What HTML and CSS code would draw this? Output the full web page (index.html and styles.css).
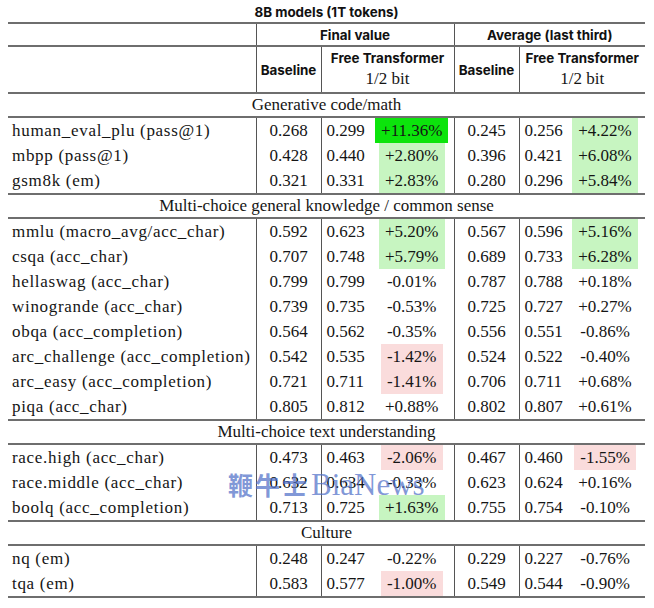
FILE: index.html
```html
<!DOCTYPE html>
<html>
<head>
<meta charset="utf-8">
<link rel="stylesheet" href="styles.css">
</head>
<body>
<div class="page">
  <div class="title">8B models (1T tokens)</div>
  <table class="results">
    <colgroup>
      <col class="w-label"><col class="w-base"><col class="w-val"><col class="w-delta"><col class="w-base"><col class="w-val2"><col class="w-delta2">
    </colgroup>
    <thead>
      <tr class="h1">
        <th></th>
        <th colspan="3" class="vl">Final value</th>
        <th colspan="3" class="vl">Average (last third)</th>
      </tr>
      <tr class="h2">
        <th></th>
        <th class="vl">Baseline</th>
        <th colspan="2" class="vl">Free Transformer<span class="sub">1/2 bit</span></th>
        <th class="vl">Baseline</th>
        <th colspan="2" class="vl">Free Transformer<span class="sub">1/2 bit</span></th>
      </tr>
    </thead>
    <tbody>
      <tr class="sec"><td colspan="7">Generative code/math</td></tr>
      <tr><td class="lbl">human_eval_plu (pass@1)</td><td class="b vl">0.268</td><td class="v vl">0.299</td><td class="d"><span class="hl strong">+11.36%</span></td><td class="b vl">0.245</td><td class="v vl">0.256</td><td class="d"><span class="hl good">+4.22%</span></td></tr>
      <tr><td class="lbl">mbpp (pass@1)</td><td class="b vl">0.428</td><td class="v vl">0.440</td><td class="d"><span class="hl good">+2.80%</span></td><td class="b vl">0.396</td><td class="v vl">0.421</td><td class="d"><span class="hl good">+6.08%</span></td></tr>
      <tr class="end"><td class="lbl">gsm8k (em)</td><td class="b vl">0.321</td><td class="v vl">0.331</td><td class="d"><span class="hl good">+2.83%</span></td><td class="b vl">0.280</td><td class="v vl">0.296</td><td class="d"><span class="hl good">+5.84%</span></td></tr>

      <tr class="sec"><td colspan="7">Multi-choice general knowledge / common sense</td></tr>
      <tr><td class="lbl">mmlu (macro_avg/acc_char)</td><td class="b vl">0.592</td><td class="v vl">0.623</td><td class="d"><span class="hl good">+5.20%</span></td><td class="b vl">0.567</td><td class="v vl">0.596</td><td class="d"><span class="hl good">+5.16%</span></td></tr>
      <tr><td class="lbl">csqa (acc_char)</td><td class="b vl">0.707</td><td class="v vl">0.748</td><td class="d"><span class="hl good">+5.79%</span></td><td class="b vl">0.689</td><td class="v vl">0.733</td><td class="d"><span class="hl good">+6.28%</span></td></tr>
      <tr><td class="lbl">hellaswag (acc_char)</td><td class="b vl">0.799</td><td class="v vl">0.799</td><td class="d"><span class="hl">-0.01%</span></td><td class="b vl">0.787</td><td class="v vl">0.788</td><td class="d"><span class="hl">+0.18%</span></td></tr>
      <tr><td class="lbl">winogrande (acc_char)</td><td class="b vl">0.739</td><td class="v vl">0.735</td><td class="d"><span class="hl">-0.53%</span></td><td class="b vl">0.725</td><td class="v vl">0.727</td><td class="d"><span class="hl">+0.27%</span></td></tr>
      <tr><td class="lbl">obqa (acc_completion)</td><td class="b vl">0.564</td><td class="v vl">0.562</td><td class="d"><span class="hl">-0.35%</span></td><td class="b vl">0.556</td><td class="v vl">0.551</td><td class="d"><span class="hl">-0.86%</span></td></tr>
      <tr><td class="lbl">arc_challenge (acc_completion)</td><td class="b vl">0.542</td><td class="v vl">0.535</td><td class="d"><span class="hl bad">-1.42%</span></td><td class="b vl">0.524</td><td class="v vl">0.522</td><td class="d"><span class="hl">-0.40%</span></td></tr>
      <tr><td class="lbl">arc_easy (acc_completion)</td><td class="b vl">0.721</td><td class="v vl">0.711</td><td class="d"><span class="hl bad">-1.41%</span></td><td class="b vl">0.706</td><td class="v vl">0.711</td><td class="d"><span class="hl">+0.68%</span></td></tr>
      <tr class="end"><td class="lbl">piqa (acc_char)</td><td class="b vl">0.805</td><td class="v vl">0.812</td><td class="d"><span class="hl">+0.88%</span></td><td class="b vl">0.802</td><td class="v vl">0.807</td><td class="d"><span class="hl">+0.61%</span></td></tr>

      <tr class="sec"><td colspan="7">Multi-choice text understanding</td></tr>
      <tr><td class="lbl">race.high (acc_char)</td><td class="b vl">0.473</td><td class="v vl">0.463</td><td class="d"><span class="hl bad">-2.06%</span></td><td class="b vl">0.467</td><td class="v vl">0.460</td><td class="d"><span class="hl bad">-1.55%</span></td></tr>
      <tr><td class="lbl">race.middle (acc_char)</td><td class="b vl">0.632</td><td class="v vl">0.634</td><td class="d"><span class="hl">-0.33%</span></td><td class="b vl">0.623</td><td class="v vl">0.624</td><td class="d"><span class="hl">+0.16%</span></td></tr>
      <tr class="end"><td class="lbl">boolq (acc_completion)</td><td class="b vl">0.713</td><td class="v vl">0.725</td><td class="d"><span class="hl good">+1.63%</span></td><td class="b vl">0.755</td><td class="v vl">0.754</td><td class="d"><span class="hl">-0.10%</span></td></tr>

      <tr class="sec"><td colspan="7">Culture</td></tr>
      <tr><td class="lbl">nq (em)</td><td class="b vl">0.248</td><td class="v vl">0.247</td><td class="d"><span class="hl">-0.22%</span></td><td class="b vl">0.229</td><td class="v vl">0.227</td><td class="d"><span class="hl">-0.76%</span></td></tr>
      <tr class="end"><td class="lbl">tqa (em)</td><td class="b vl">0.583</td><td class="v vl">0.577</td><td class="d"><span class="hl bad">-1.00%</span></td><td class="b vl">0.549</td><td class="v vl">0.544</td><td class="d"><span class="hl">-0.90%</span></td></tr>
    </tbody>
  </table>
  <div class="watermark"><span class="wm-cjk">鞭牛士</span><span class="wm-lat">BiaNews</span></div>
</div>
</body>
</html>
```

FILE: styles.css
```css
html, body {
  margin: 0;
  padding: 0;
  background: #ffffff;
}

.page {
  position: relative;
  padding: 0 8px;
  width: 637px;
}

.title {
  height: 22px;
  line-height: 24px;
  text-align: center;
  font-family: Inter, "Liberation Sans", sans-serif;
  font-weight: 700;
  font-size: 13.4px;
  color: #111;
}

.results {
  width: 637px;
  table-layout: fixed;
  border-collapse: collapse;
  font-family: "Liberation Serif", "DejaVu Serif", "Times New Roman", serif;
  font-size: 17px;
  color: #151515;
}

.w-label { width: 248px; }
.w-base { width: 65px; }
.w-val { width: 49px; }
.w-delta { width: 84px; }
.w-val2 { width: 46px; }
.w-delta2 { width: 80px; }

.results th,
.results td {
  padding: 0;
  white-space: nowrap;
}

.results thead tr {
  border-top: 2px solid #6e6e6e;
}

.results th {
  font-family: Inter, "Liberation Sans", sans-serif;
  font-weight: 700;
  font-size: 13.4px;
  color: #111;
  text-align: center;
  vertical-align: middle;
}

.h1 { height: 23px; }
.h2 { height: 47px; }

.h2 th .sub {
  display: block;
  font-family: "Liberation Serif", "DejaVu Serif", "Times New Roman", serif;
  font-weight: 400;
  font-size: 17px;
  color: #151515;
  margin-top: 3px;
}

.vl {
  border-left: 1px solid #555;
}

.sec {
  border-top: 2px solid #6e6e6e;
  border-bottom: 2px solid #6e6e6e;
}

.sec td {
  height: 22px;
  text-align: center;
  vertical-align: middle;
}

.results tbody tr:not(.sec) td {
  height: 25px;
  vertical-align: middle;
}

.end {
  border-bottom: 2px solid #6e6e6e;
}

.lbl {
  padding-left: 4px !important;
  letter-spacing: 0.7px;
}

.b {
  text-align: center;
}

.v {
  text-align: left;
  padding-left: 5px !important;
}

.d {
  text-align: center;
}

.hl {
  display: inline-block;
  line-height: 25px;
  padding: 0 6px;
}

.hl.strong { background: #0ce40c; }
.hl.good { background: #c7f5c1; }
.hl.bad { background: #fadcdc; }

.watermark {
  position: absolute;
  left: 228px;
  top: 466px;
  white-space: nowrap;
  color: rgba(80, 112, 200, 0.72);
  pointer-events: none;
}

.wm-cjk {
  font-family: "Noto Sans CJK SC", sans-serif;
  font-weight: 700;
  font-size: 25px;
  letter-spacing: 2px;
  margin-right: 2px;
}

.wm-lat {
  font-family: "Liberation Serif", "DejaVu Serif", serif;
  font-size: 31px;
}
```
